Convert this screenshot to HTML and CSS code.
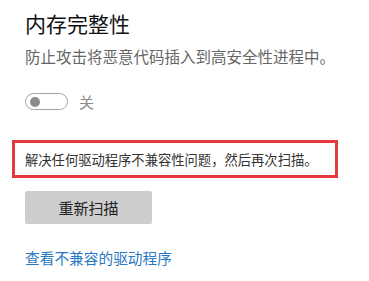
FILE: index.html
```html
<!DOCTYPE html>
<html lang="zh-CN">
<head>
<meta charset="utf-8">
<link rel="stylesheet" href="styles.css">
</head>
<body>
<div class="page">
  <h1 class="title">内存完整性</h1>
  <p class="desc">防止攻击将恶意代码插入到高安全性进程中。</p>
  <div class="toggle-row">
    <span class="toggle"><span class="knob"></span></span>
    <span class="toggle-label">关</span>
  </div>
  <div class="notice">解决任何驱动程序不兼容性问题，然后再次扫描。</div>
  <button class="btn">重新扫描</button>
  <a class="link" href="#">查看不兼容的驱动程序</a>
</div>
</body>
</html>
```
FILE: styles.css
```css
html, body {
  margin: 0;
  padding: 0;
  background: #ffffff;
}
body {
  font-family: "Noto Sans CJK SC", "Noto Sans", sans-serif;
}
.page {
  display: flex;
  flex-direction: column;
  align-items: flex-start;
  padding: 8px 0 0 25px;
}
.title {
  margin: 0;
  font-size: 21px;
  line-height: 30px;
  font-weight: 400;
  color: #111111;
}
.desc {
  margin: 7px 0 0;
  font-size: 15.5px;
  line-height: 22px;
  color: #666666;
}
.toggle-row {
  margin-top: 26px;
  display: flex;
  align-items: center;
  gap: 11px;
  height: 17px;
}
.toggle {
  box-sizing: border-box;
  width: 43px;
  height: 17px;
  border: 1.5px solid #a3a3a3;
  border-radius: 9px;
  display: flex;
  align-items: center;
  padding-left: 4px;
}
.knob {
  width: 10px;
  height: 10px;
  border-radius: 50%;
  background: #8c8c8c;
}
.toggle-label {
  font-size: 15px;
  line-height: 17px;
  color: #8a8a8a;
}
.notice {
  box-sizing: border-box;
  margin: 30px 0 0 -13px;
  width: 326px;
  height: 38px;
  border: 3px solid #e5393d;
  padding-left: 10px;
  display: flex;
  align-items: center;
  font-size: 13.3px;
  color: #333333;
}
.btn {
  margin-top: 13px;
  width: 127px;
  height: 33px;
  border: none;
  border-radius: 2px;
  background: #cdcdcd;
  font-family: "Noto Sans CJK SC", "Noto Sans", sans-serif;
  font-size: 15px;
  color: #222222;
  padding: 0;
}
.link {
  margin-top: 24px;
  font-size: 14.7px;
  line-height: 20px;
  color: #2a78c0;
  text-decoration: none;
}
```
